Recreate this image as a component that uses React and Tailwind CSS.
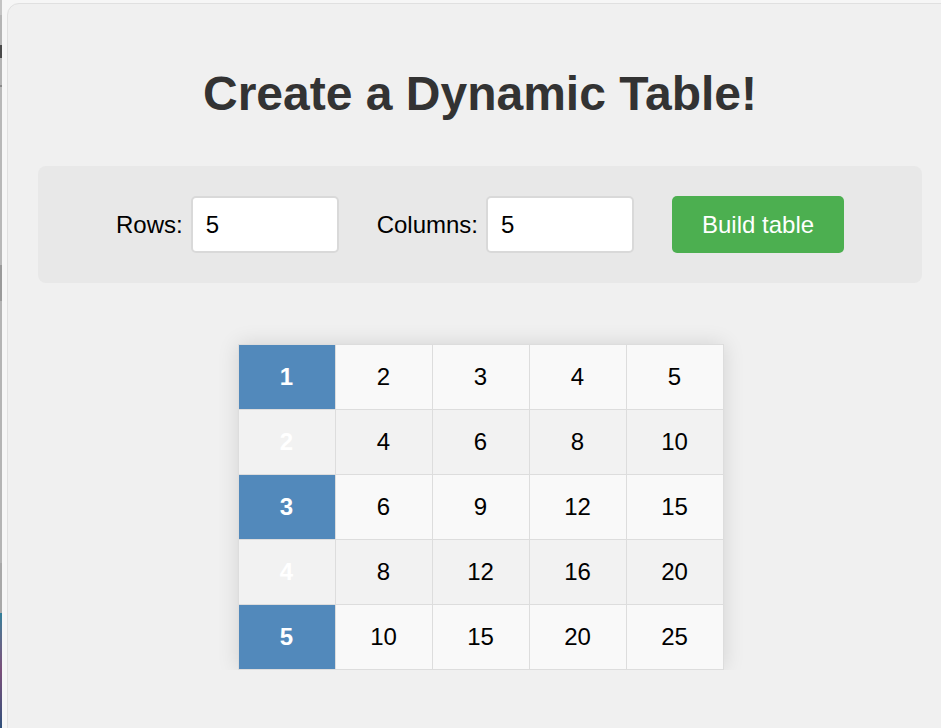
import React from 'react'

const ROWS = 5
const COLS = 5

function EdgeStrip() {
  // sliver of the window behind, visible at the very left
  return (
    <div className="flex w-[2px] shrink-0 flex-col">
      <div className="h-[15px] bg-[#c4c4c4]" />
      <div className="h-[30px] bg-[#b4b4b4]" />
      <div className="h-[13px] bg-[#4a4a4a]" />
      <div className="h-[27px] bg-[#b4b4b4]" />
      <div className="h-[2px] bg-[#8a8a8a]" />
      <div className="h-[178px] bg-[#b8b8b8]" />
      <div className="h-[36px] bg-[#9a9a9a]" />
      <div className="h-[262px] bg-[#b4b4b4]" />
      <div className="h-[50px] bg-[#a8a8a8]" />
      <div className="flex-1 bg-gradient-to-b from-[#2f7f9a] via-[#7a4f7a] to-[#2d4f7a]" />
    </div>
  )
}

function Field({ label, value }) {
  return (
    <div className="flex items-center gap-2">
      <label className="text-[24px] text-black">{label}</label>
      <input
        type="text"
        defaultValue={value}
        className="h-[57px] w-[148px] rounded-[5px] border-2 border-[#d9d9d9] bg-white pl-[13px] text-[24px] text-black outline-none"
      />
    </div>
  )
}

function Table() {
  const cells = []
  for (let r = 1; r <= ROWS; r++) {
    for (let c = 1; c <= COLS; c++) {
      const even = r % 2 === 0
      let cls = 'flex h-[65px] w-[97px] items-center justify-center border-r border-b border-[#dddddd] text-[24px]'
      if (c === 1) {
        cls += even ? ' bg-[#f2f2f2] font-bold text-white' : ' bg-[#5289bb] font-bold text-white'
      } else {
        cls += even ? ' bg-[#f2f2f2] text-black' : ' bg-[#f9f9f9] text-black'
      }
      cells.push(
        <div key={r + '-' + c} className={cls}>
          {r * c}
        </div>
      )
    }
  }
  return (
    <div className="mt-[41px] flex justify-center overflow-hidden pt-5 pr-6 pl-[25px]">
      <div className="grid grid-cols-[repeat(5,97px)] border-t border-l border-[#dddddd] shadow-[0_0_20px_rgba(0,0,0,0.12)]">
        {cells}
      </div>
    </div>
  )
}

export default function App() {
  return (
    <div className="flex h-[728px] w-[941px] overflow-hidden bg-[#f6f6f6] font-['Liberation_Sans',Arial,sans-serif]">
      <EdgeStrip />
      <div className="ml-[5px] mt-[3px] h-[800px] w-[946px] shrink-0 rounded-t-[12px] border border-[#e0e0e0] bg-[#f0f0f0] px-[30px] pt-[30px]">
        <h1 className="mt-8 mb-[45px] text-center text-[48px] font-bold leading-[55px] text-[#333333]">
          Create a Dynamic Table!
        </h1>

        <div className="flex h-[117px] items-center justify-center gap-[38px] rounded-lg bg-[#e8e8e8]">
          <Field label="Rows:" value="5" />
          <Field label="Columns:" value="5" />
          <button className="h-[57px] w-[172px] rounded-[5px] bg-[#4caf50] text-[24px] text-white">
            Build table
          </button>
        </div>

        <Table />
      </div>
    </div>
  )
}
